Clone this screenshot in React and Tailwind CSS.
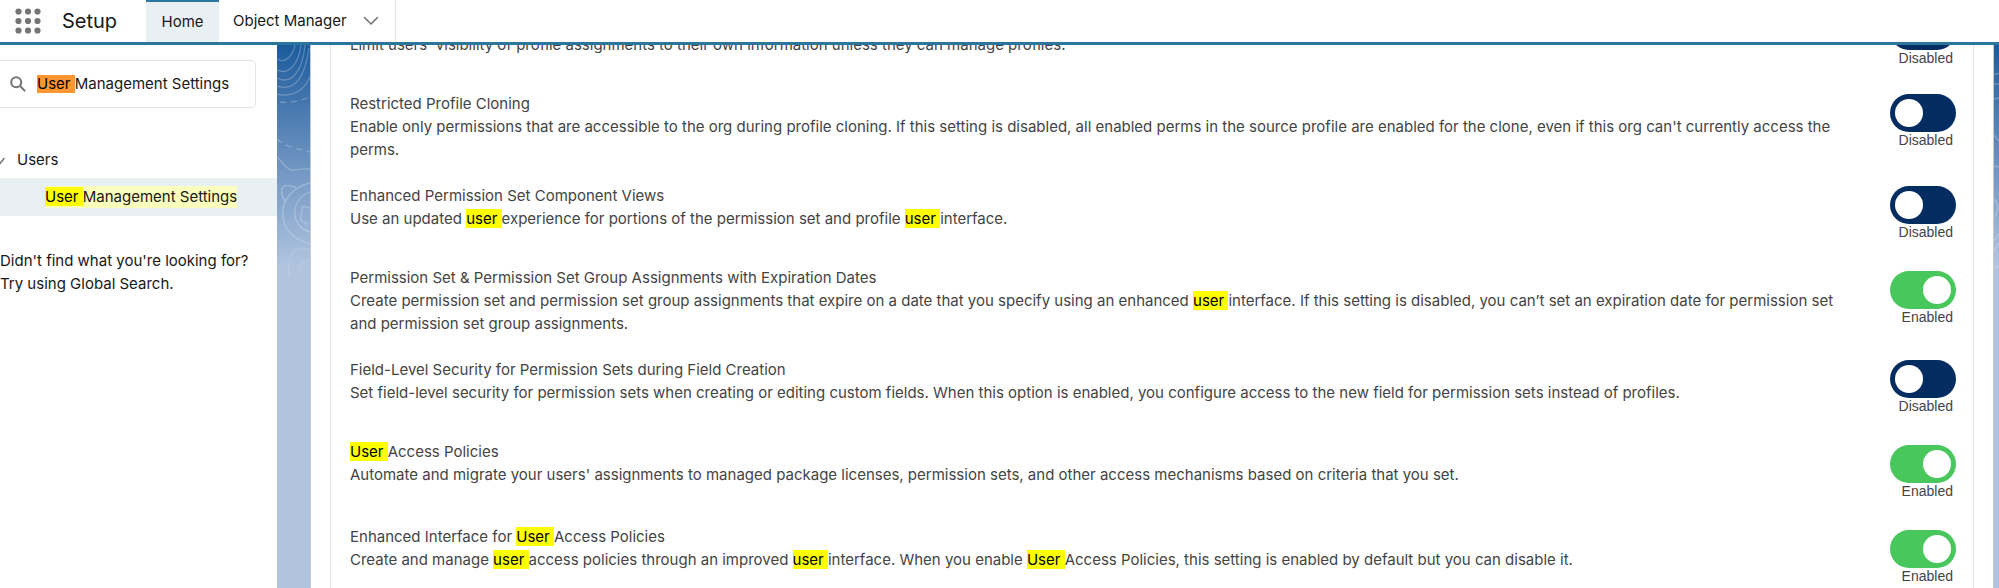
import { useState } from 'react';
import { clsx } from 'clsx';

const SETTINGS = [
  {
    id: 'profile-filtering',
    title: 'Profile Filtering',
    description:
      "Limit users' visibility of profile assignments to their own information unless they can manage profiles.",
    enabled: false,
  },
  {
    id: 'profile-cloning',
    title: 'Restricted Profile Cloning',
    description:
      "Enable only permissions that are accessible to the org during profile cloning. If this setting is disabled, all enabled perms in the source profile are enabled for the clone, even if this org can't currently access the perms.",
    enabled: false,
  },
  {
    id: 'component-views',
    title: 'Enhanced Permission Set Component Views',
    description:
      'Use an updated user experience for portions of the permission set and profile user interface.',
    enabled: false,
  },
  {
    id: 'expiration-dates',
    title: 'Permission Set & Permission Set Group Assignments with Expiration Dates',
    description:
      'Create permission set and permission set group assignments that expire on a date that you specify using an enhanced user interface. If this setting is disabled, you can’t set an expiration date for permission set and permission set group assignments.',
    enabled: true,
  },
  {
    id: 'field-level-security',
    title: 'Field-Level Security for Permission Sets during Field Creation',
    description:
      'Set field-level security for permission sets when creating or editing custom fields. When this option is enabled, you configure access to the new field for permission sets instead of profiles.',
    enabled: false,
  },
  {
    id: 'access-policies',
    title: 'User Access Policies',
    description:
      "Automate and migrate your users' assignments to managed package licenses, permission sets, and other access mechanisms based on criteria that you set.",
    enabled: true,
  },
  {
    id: 'access-policies-interface',
    title: 'Enhanced Interface for User Access Policies',
    description:
      'Create and manage user access policies through an improved user interface. When you enable User Access Policies, this setting is enabled by default but you can disable it.',
    enabled: true,
  },
];

// Marks every "user " in the text, trailing space included
function Highlight({ text }) {
  return text.split(/(user )/i).map((part, i) =>
    /^user $/i.test(part) ? (
      <mark key={i} className="bg-[#ffff00] text-black">{part}</mark>
    ) : (
      part
    )
  );
}

function AppLauncherIcon() {
  return (
    <svg width="26" height="26" viewBox="0 0 26 26" fill="#747474" aria-hidden="true">
      {[3.5, 13, 22.5].map((y) =>
        [3.5, 13, 22.5].map((x) => <circle key={`${x}-${y}`} cx={x} cy={y} r="3.1" />)
      )}
    </svg>
  );
}

function Header() {
  return (
    <header className="flex h-[45px] shrink-0 items-stretch border-b-3 border-[#2c759f] bg-white text-[#181818]">
      <button className="ml-[15px] flex w-[28px] items-center" aria-label="App Launcher">
        <AppLauncherIcon />
      </button>
      <span className="ml-[19px] flex w-[84px] items-center text-[20px]">Setup</span>
      <nav className="flex items-stretch border-r border-[#e5e5e5] text-[15px]">
        <a href="#home" className="flex w-[73px] items-center justify-center border-t-2 border-[#2c759f] bg-[#e8f0f3]">
          Home
        </a>
        <a href="#object-manager" className="flex items-center pl-[14px]">Object Manager</a>
        <button className="flex items-center px-4" aria-label="Object Manager menu">
          <svg width="16" height="10" viewBox="0 0 16 10" fill="none" stroke="#747474" strokeWidth="1.6" aria-hidden="true">
            <path d="M1.5 1.5 8 8l6.5-6.5" strokeLinecap="round" strokeLinejoin="round" />
          </svg>
        </button>
      </nav>
    </header>
  );
}

function Sidebar() {
  const [query, setQuery] = useState('Management Settings');

  return (
    <aside className="w-[277px] shrink-0 bg-white text-[15px] text-[#181818]">
      <label className="mt-[15px] mr-[21px] flex h-12 items-center rounded-r-[5px] border border-l-0 border-[#e5e5e5] pl-[10px]">
        <svg width="16" height="16" viewBox="0 0 16 16" fill="none" stroke="#747474" strokeWidth="2" aria-hidden="true">
          <circle cx="6.2" cy="6.2" r="5" />
          <path d="m10 10 4.6 4.6" strokeLinecap="round" />
        </svg>
        <span className="ml-[11px] bg-[#ff9632] leading-[18px] text-black whitespace-pre">User </span>
        <input
          className="min-w-0 flex-1 outline-none"
          aria-label="Quick Find"
          value={query}
          onChange={(e) => setQuery(e.target.value)}
        />
      </label>

      <button className="mt-[41px] flex h-[23px] items-center">
        <svg width="5" height="8" viewBox="0 0 5 8" fill="none" stroke="#747474" strokeWidth="1.5" aria-hidden="true">
          <path d="M-4 1.5 0 6.5 4.5 1" />
        </svg>
        <span className="ml-3">Users</span>
      </button>
      <a href="#user-management" className="mt-[6px] flex h-[38px] items-center bg-[#e8f0f3] pl-[45px]">
        <span className="bg-[#faffbd]">
          <mark className="bg-[#ffff00] text-black">User </mark>
          Management Settings
        </span>
      </a>
      <p className="mt-[33px] leading-[23px]">
        Didn't find what you're looking for?
        <br />
        Try using Global Search.
      </p>
    </aside>
  );
}

function SettingRow({ setting }) {
  const [enabled, setEnabled] = useState(setting.enabled);

  return (
    <li className="flex justify-between pb-[23px]">
      <div className="max-w-[1510px] text-[15px] leading-[23px] text-[#444444]">
        <h3><Highlight text={setting.title} /></h3>
        <p><Highlight text={setting.description} /></p>
      </div>
      <label
        className={clsx(
          'flex shrink-0 cursor-pointer flex-col items-end',
          enabled ? 'pt-[5px]' : 'pt-[2px]'
        )}
      >
        <input
          type="checkbox"
          role="switch"
          className="peer sr-only"
          aria-label={setting.title}
          checked={enabled}
          onChange={(e) => setEnabled(e.target.checked)}
        />
        <span
          className={clsx(
            'flex h-[38px] w-[66px] items-center rounded-full px-[5px] peer-focus-visible:ring-2',
            enabled ? 'justify-end bg-[#48c75c]' : 'bg-[#032d60]'
          )}
        >
          <span className="size-[28px] rounded-full bg-white" />
        </span>
        <span className="mr-[3px] mb-[2px] font-['Liberation_Sans',Arial,sans-serif] text-[14px] leading-[17px] text-[#444444]">
          {enabled ? 'Enabled' : 'Disabled'}
        </span>
      </label>
    </li>
  );
}

function LeftBackdrop() {
  return (
    <svg className="block" width="33" height="250" viewBox="0 0 33 250" fill="none" stroke="#fff" strokeOpacity="0.25" strokeWidth="1.3" aria-hidden="true">
      <path d="M0 14c8 5 16-3 18-14M0 25c13 6 22-8 24-25M0 33c16 8 26-10 28-33M0 41c18 6 28-9 32-38M0 49c14 4 27-3 33-17" />
      <path d="M3 57c11 1 20-1 30-5M0 94c8 8 18 9 33 13" strokeDasharray="6 5" />
      <path d="M0 112c5 4 8 11 14 13 5 1 9-2 19-1" />
      <path d="M33 138C14 143 4 156 6 173c2 14 13 22 27 26M8 157c-4-8-4-14-1-16 5-1 11 0 13 3" />
      <path d="M33 147c-11 4-16 13-15 24 1 8 7 14 15 16M33 163c-4 0-5-3-8-1 2 6-3 8-1 13s5 0 6 5" />
      <path d="M12 232c-1-20 2-27 11-28h10M23 225c0-5 4-9 9-11" strokeOpacity="0.15" />
    </svg>
  );
}

function RightBackdrop() {
  return (
    <svg className="block" width="5" height="250" viewBox="0 0 5 250" fill="none" stroke="#fff" strokeOpacity="0.25" strokeWidth="1.3" aria-hidden="true">
      <path d="M0 30 5 28M0 39h5M0 54l5-1M0 90l5 6M0 121l5 1M0 154c4 4 5 10 1 18M0 196l5-8M0 206l5-8" />
      <path d="M0 224l5-3" />
    </svg>
  );
}

export default function App() {
  return (
    <div className="flex h-screen flex-col overflow-hidden bg-white font-[Inter,'Liberation_Sans',sans-serif]">
      <Header />
      <div className="flex min-h-0 flex-1">
        <Sidebar />
        <main className="flex min-w-0 flex-1 overflow-hidden bg-linear-to-b from-[#195b9c] from-0% via-[#b0c4df] via-[220px] to-[#b0c4df]">
          <div className="w-[33px] shrink-0"><LeftBackdrop /></div>
          <section className="min-w-0 flex-1 border-x border-[#c9c9c9] bg-white px-[19px]">
            <ul className="-mt-[35px] border-x border-[#e5e5e5] pr-[17px] pl-[19px]">
              {SETTINGS.map((setting) => (
                <SettingRow key={setting.id} setting={setting} />
              ))}
            </ul>
          </section>
          <div className="w-[5px] shrink-0"><RightBackdrop /></div>
        </main>
      </div>
    </div>
  );
}
